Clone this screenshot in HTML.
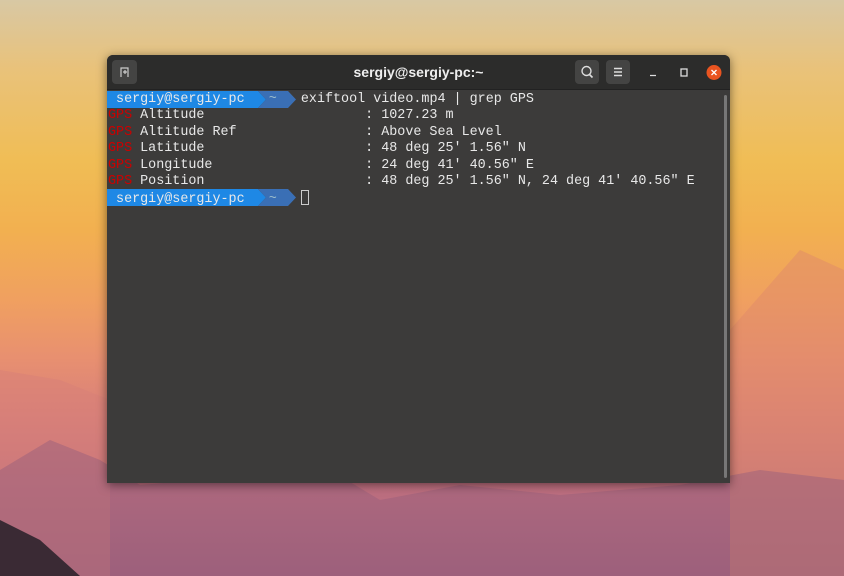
<!DOCTYPE html>
<html><head><meta charset="utf-8"><style>
body{margin:0;width:844px;height:576px;overflow:hidden;position:relative;
background:linear-gradient(180deg,#d8c8a4 0%,#e9c27a 12%,#f0bd55 28%,#f2b050 40%,#f0a060 52%,#e89070 62%,#d8807a 72%,#c07080 84%,#a0607c 100%);font-family:"Liberation Sans",sans-serif}
svg.bg{position:absolute;left:0;top:0}
.win{position:absolute;left:107px;top:55px;width:623px;height:428px;background:#3c3b3a;box-shadow:0 2px 10px rgba(0,0,0,.5);border-radius:6px 6px 0 0;overflow:hidden}
.tb{height:34px;background:#2c2c2b;position:relative;border-bottom:1px solid #222}
.title{position:absolute;left:0;right:0;top:9px;text-align:center;color:#eee;font-weight:bold;font-size:14px}
.btn{position:absolute;top:5px;width:24px;height:24px;background:#444443;border-radius:4px}
.term{position:absolute;left:1px;top:37px;font-family:"Liberation Mono",monospace;font-size:13.4px;line-height:16.4px;color:#e8e8e8;white-space:pre}
.r{color:#cc0000}
.scroll{position:absolute;right:3px;top:40px;width:3px;height:383px;background:#777;border-radius:2px}
</style></head><body>
<svg class="bg" width="844" height="576">
<path d="M0 370 L60 380 L110 400 L110 576 L0 576Z" fill="#d88078" opacity=".5"/>
<path d="M730 330 L800 250 L844 270 L844 576 L730 576Z" fill="#e08a6a" opacity=".5"/>
<path d="M0 470 L50 440 L100 460 L140 485 L200 480 L330 470 L380 500 L460 485 L560 495 L680 485 L760 470 L844 480 L844 576 L0 576Z" fill="#9a607c" opacity=".5"/>
<path d="M0 520 L40 540 L80 576 L0 576Z" fill="#3a2a34"/>
</svg>
<div class="win">
<div class="tb">
<div class="btn" style="left:5px;width:25px"><svg width="25" height="24"><path d="M9 17 V8 H16 V17 M11 12 H15 M13 10 V14" stroke="#ccc" fill="none" stroke-width="1.2"/></svg></div>
<div class="title">sergiy@sergiy-pc:~</div>
<div class="btn" style="left:468px"><svg width="24" height="24"><circle cx="11.5" cy="11" r="4.5" stroke="#ddd" fill="none" stroke-width="1.4"/><path d="M14.5 14.5 L17.5 17.5" stroke="#ddd" stroke-width="1.6"/></svg></div>
<div class="btn" style="left:499px"><svg width="24" height="24"><path d="M8 8.5H16M8 12H16M8 15.5H16" stroke="#ddd" stroke-width="1.4"/></svg></div>
<svg style="position:absolute;left:538px;top:8px" width="90" height="20"><path d="M5 12.5H11" stroke="#ddd" stroke-width="1.3"/><rect x="36" y="6" width="6" height="7" stroke="#ddd" fill="none" stroke-width="1.3"/><circle cx="69" cy="9.5" r="7.5" fill="#e95420"/><path d="M66.5 7L71.5 12M71.5 7L66.5 12" stroke="#fff" stroke-width="1.3"/></svg>
</div>
<div class="term"><svg style="position:absolute;left:-1px;top:-1px" width="200" height="17"><path d="M0 0H151L159 8.5L151 17H0Z" fill="#1e88e5"/><path d="M151 0H181L189 8.5L181 17H151L159 8.5Z" fill="#3a6fb5"/></svg><svg style="position:absolute;left:-1px;top:97px" width="200" height="17"><path d="M0 0H151L159 8.5L151 17H0Z" fill="#1e88e5"/><path d="M151 0H181L189 8.5L181 17H151L159 8.5Z" fill="#3a6fb5"/></svg><span style="position:relative"> sergiy@sergiy-pc   <span style="color:#9bc">~</span>   exiftool video.mp4 | grep GPS</span>
<span class="r">GPS</span> Altitude                    : 1027.23 m
<span class="r">GPS</span> Altitude Ref                : Above Sea Level
<span class="r">GPS</span> Latitude                    : 48 deg 25' 1.56" N
<span class="r">GPS</span> Longitude                   : 24 deg 41' 40.56" E
<span class="r">GPS</span> Position                    : 48 deg 25' 1.56" N, 24 deg 41' 40.56" E
<span style="position:relative"> sergiy@sergiy-pc   <span style="color:#9bc">~</span>   <span style="display:inline-block;width:8px;height:15px;border:1px solid #ccc;box-sizing:border-box;vertical-align:-3px"></span></span></div>
<div class="scroll"></div>
</div>
</body></html>
